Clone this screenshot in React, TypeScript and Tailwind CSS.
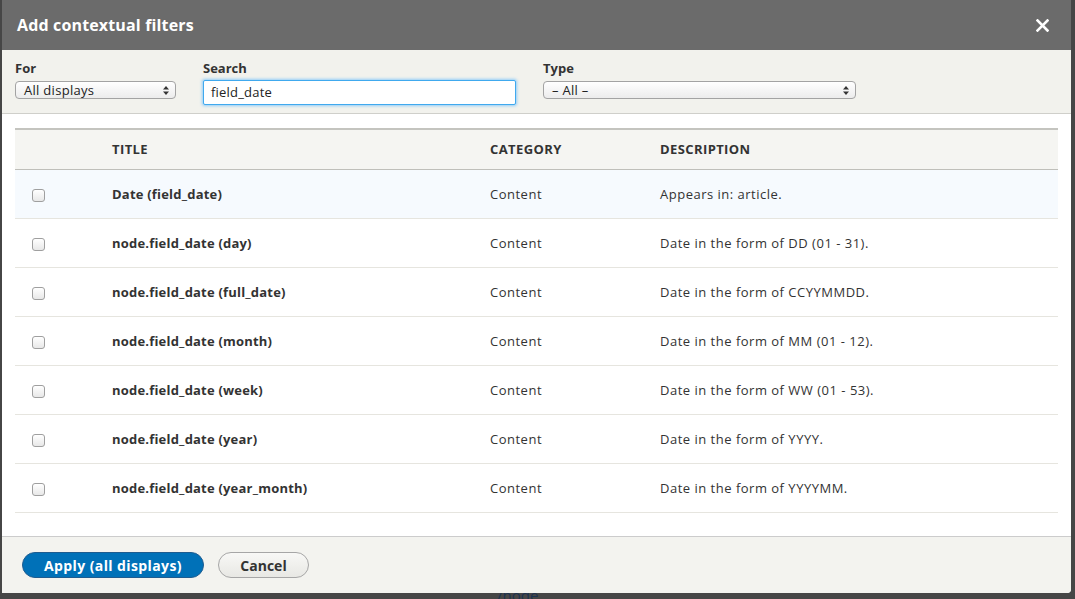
import React from "react";

const rows = [
  { title: "Date (field_date)", category: "Content", description: "Appears in: article.", active: true },
  { title: "node.field_date (day)", category: "Content", description: "Date in the form of DD (01 - 31)." },
  { title: "node.field_date (full_date)", category: "Content", description: "Date in the form of CCYYMMDD." },
  { title: "node.field_date (month)", category: "Content", description: "Date in the form of MM (01 - 12)." },
  { title: "node.field_date (week)", category: "Content", description: "Date in the form of WW (01 - 53)." },
  { title: "node.field_date (year)", category: "Content", description: "Date in the form of YYYY." },
  { title: "node.field_date (year_month)", category: "Content", description: "Date in the form of YYYYMM." },
];

function SelectArrows() {
  return (
    <svg width="6" height="9" viewBox="0 0 6 9" className="shrink-0">
      <path d="M3 0 L6 3.5 L0 3.5 Z" fill="#333" />
      <path d="M3 9 L6 5.5 L0 5.5 Z" fill="#333" />
    </svg>
  );
}

function MacSelect({ value, width }: { value: string; width: string }) {
  return (
    <div
      className={`${width} h-[18px] flex items-center justify-between pl-[8px] pr-[6px] rounded-[4px] border border-[#a3a3a3] bg-gradient-to-b from-white to-[#ececec] text-[13px] tracking-[0.3px] leading-none text-[#222]`}
    >
      <span>{value}</span>
      <SelectArrows />
    </div>
  );
}

function Checkbox() {
  return (
    <div className="w-[13px] h-[13px] rounded-[3px] border border-[#9f9f9f] bg-gradient-to-b from-white to-[#e8e8e8]" />
  );
}

export default function App() {
  return (
    <div className="relative w-[1075px] h-[599px] overflow-hidden bg-[#464646] font-['Open_Sans',sans-serif] text-[#333]">
      {/* page underneath the overlay */}
      <span className="absolute left-[497px] top-[584px] text-[15px] text-[#1d3350]">/node</span>

      <div className="relative z-10 ml-[2px] w-[1069px] h-[593px] flex flex-col bg-white rounded-br-[4px] overflow-hidden">
        <div className="h-[50px] shrink-0 bg-[#6b6b6b] flex items-center justify-between pl-[15px] pr-[22px]">
          <h1 className="text-[16px] font-bold text-white tracking-[0.15px] -mt-[1px]">Add contextual filters</h1>
          <svg width="13" height="13" viewBox="0 0 13 13">
            <path d="M1.5 1.5 L11.5 11.5 M11.5 1.5 L1.5 11.5" stroke="white" strokeWidth="2.6" strokeLinecap="square" />
          </svg>
        </div>

        <div className="h-[64px] shrink-0 bg-[#f2f2ed] border-b border-[#cfcfca] flex pl-[13px] pt-[10px]">
          <div className="w-[188px]">
            <div className="text-[13px] font-bold leading-[16px] mb-[5px]">For</div>
            <MacSelect value="All displays" width="w-[161px]" />
          </div>
          <div className="w-[340px]">
            <div className="text-[13px] font-bold leading-[16px] mb-[4px]">Search</div>
            <div className="w-[313px] h-[25px] flex items-center px-[7px] bg-white border border-[#40a9ee] rounded-[2px] shadow-[0_0_3px_1px_rgba(80,180,255,0.6)] text-[13px] tracking-[0.2px] text-[#222]">
              field_date
            </div>
          </div>
          <div>
            <div className="text-[13px] font-bold leading-[16px] mb-[5px]">Type</div>
            <MacSelect value="– All –" width="w-[313px]" />
          </div>
        </div>

        <div className="flex-1 bg-white px-[13px] pt-[14px]">
          <div className="border-t-2 border-[#c4c4bf]">
            <div className="grid grid-cols-[97px_378px_170px_1fr] h-[40px] items-center bg-[#f5f5f2] border-b border-[#bfbfba] text-[13px] font-bold uppercase tracking-[0.4px]">
              <div />
              <div>Title</div>
              <div>Category</div>
              <div>Description</div>
            </div>
            {rows.map((r) => (
              <div
                key={r.title}
                className={`grid grid-cols-[97px_378px_170px_1fr] h-[49px] pt-[2px] items-center border-b border-[#e6e5df] text-[13px] tracking-[0.5px] ${
                  r.active ? "bg-[#f6fafe]" : "bg-white"
                }`}
              >
                <div className="pl-[17px]">
                  <Checkbox />
                </div>
                <div className="font-bold tracking-[0.2px]">{r.title}</div>
                <div>{r.category}</div>
                <div>{r.description}</div>
              </div>
            ))}
          </div>
        </div>

        <div className="h-[57px] shrink-0 bg-[#f3f3ef] border-t border-[#cccccc] flex items-start gap-[14px] pl-[20px] pt-[15px]">
          <button className="w-[182px] h-[26px] rounded-full bg-[#0071b8] border border-[#1e5c90] text-white text-[14px] font-bold tracking-[0.4px]">
            Apply (all displays)
          </button>
          <button className="w-[91px] h-[26px] rounded-full bg-gradient-to-b from-[#f8f8f6] to-[#e8e8e4] border border-[#a6a6a6] text-[#333] text-[14px] font-bold">
            Cancel
          </button>
        </div>
      </div>
    </div>
  );
}
